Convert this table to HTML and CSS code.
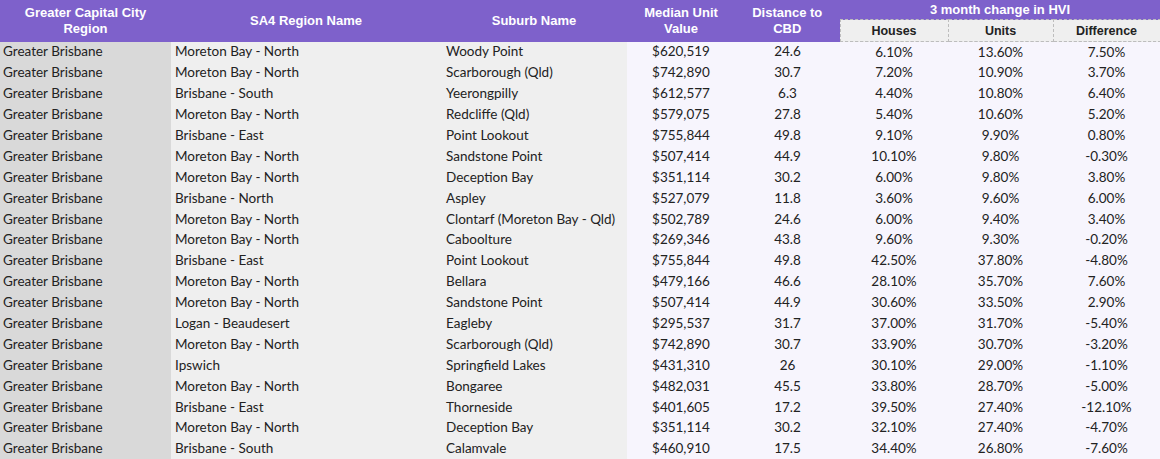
FILE: index.html
```html
<!DOCTYPE html>
<html>
<head>
<meta charset="utf-8">
<link rel="stylesheet" href="styles.css">
</head>
<body>
<table class="hvi">
  <colgroup>
    <col class="c-city">
    <col class="c-sa4">
    <col class="c-suburb">
    <col class="c-num">
    <col class="c-num2">
    <col class="c-h">
    <col class="c-u">
    <col class="c-d">
  </colgroup>
  <thead>
    <tr class="hr1">
      <th rowspan="2">Greater Capital City<br>Region</th>
      <th rowspan="2">SA4 Region Name</th>
      <th rowspan="2">Suburb Name</th>
      <th rowspan="2">Median Unit<br>Value</th>
      <th rowspan="2">Distance to<br>CBD</th>
      <th colspan="3" class="group">3 month change in HVI</th>
    </tr>
    <tr class="hr2">
      <th class="sub">Houses</th>
      <th class="sub">Units</th>
      <th class="sub">Difference</th>
    </tr>
  </thead>
  <tbody>
    <tr><td class="city">Greater Brisbane</td><td class="sa4">Moreton Bay - North</td><td class="sub-n">Woody Point</td><td>$620,519</td><td>24.6</td><td>6.10%</td><td>13.60%</td><td>7.50%</td></tr>
    <tr><td class="city">Greater Brisbane</td><td class="sa4">Moreton Bay - North</td><td class="sub-n">Scarborough (Qld)</td><td>$742,890</td><td>30.7</td><td>7.20%</td><td>10.90%</td><td>3.70%</td></tr>
    <tr><td class="city">Greater Brisbane</td><td class="sa4">Brisbane - South</td><td class="sub-n">Yeerongpilly</td><td>$612,577</td><td>6.3</td><td>4.40%</td><td>10.80%</td><td>6.40%</td></tr>
    <tr><td class="city">Greater Brisbane</td><td class="sa4">Moreton Bay - North</td><td class="sub-n">Redcliffe (Qld)</td><td>$579,075</td><td>27.8</td><td>5.40%</td><td>10.60%</td><td>5.20%</td></tr>
    <tr><td class="city">Greater Brisbane</td><td class="sa4">Brisbane - East</td><td class="sub-n">Point Lookout</td><td>$755,844</td><td>49.8</td><td>9.10%</td><td>9.90%</td><td>0.80%</td></tr>
    <tr><td class="city">Greater Brisbane</td><td class="sa4">Moreton Bay - North</td><td class="sub-n">Sandstone Point</td><td>$507,414</td><td>44.9</td><td>10.10%</td><td>9.80%</td><td>-0.30%</td></tr>
    <tr><td class="city">Greater Brisbane</td><td class="sa4">Moreton Bay - North</td><td class="sub-n">Deception Bay</td><td>$351,114</td><td>30.2</td><td>6.00%</td><td>9.80%</td><td>3.80%</td></tr>
    <tr><td class="city">Greater Brisbane</td><td class="sa4">Brisbane - North</td><td class="sub-n">Aspley</td><td>$527,079</td><td>11.8</td><td>3.60%</td><td>9.60%</td><td>6.00%</td></tr>
    <tr><td class="city">Greater Brisbane</td><td class="sa4">Moreton Bay - North</td><td class="sub-n">Clontarf (Moreton Bay - Qld)</td><td>$502,789</td><td>24.6</td><td>6.00%</td><td>9.40%</td><td>3.40%</td></tr>
    <tr><td class="city">Greater Brisbane</td><td class="sa4">Moreton Bay - North</td><td class="sub-n">Caboolture</td><td>$269,346</td><td>43.8</td><td>9.60%</td><td>9.30%</td><td>-0.20%</td></tr>
    <tr><td class="city">Greater Brisbane</td><td class="sa4">Brisbane - East</td><td class="sub-n">Point Lookout</td><td>$755,844</td><td>49.8</td><td>42.50%</td><td>37.80%</td><td>-4.80%</td></tr>
    <tr><td class="city">Greater Brisbane</td><td class="sa4">Moreton Bay - North</td><td class="sub-n">Bellara</td><td>$479,166</td><td>46.6</td><td>28.10%</td><td>35.70%</td><td>7.60%</td></tr>
    <tr><td class="city">Greater Brisbane</td><td class="sa4">Moreton Bay - North</td><td class="sub-n">Sandstone Point</td><td>$507,414</td><td>44.9</td><td>30.60%</td><td>33.50%</td><td>2.90%</td></tr>
    <tr><td class="city">Greater Brisbane</td><td class="sa4">Logan - Beaudesert</td><td class="sub-n">Eagleby</td><td>$295,537</td><td>31.7</td><td>37.00%</td><td>31.70%</td><td>-5.40%</td></tr>
    <tr><td class="city">Greater Brisbane</td><td class="sa4">Moreton Bay - North</td><td class="sub-n">Scarborough (Qld)</td><td>$742,890</td><td>30.7</td><td>33.90%</td><td>30.70%</td><td>-3.20%</td></tr>
    <tr><td class="city">Greater Brisbane</td><td class="sa4">Ipswich</td><td class="sub-n">Springfield Lakes</td><td>$431,310</td><td>26</td><td>30.10%</td><td>29.00%</td><td>-1.10%</td></tr>
    <tr><td class="city">Greater Brisbane</td><td class="sa4">Moreton Bay - North</td><td class="sub-n">Bongaree</td><td>$482,031</td><td>45.5</td><td>33.80%</td><td>28.70%</td><td>-5.00%</td></tr>
    <tr><td class="city">Greater Brisbane</td><td class="sa4">Brisbane - East</td><td class="sub-n">Thorneside</td><td>$401,605</td><td>17.2</td><td>39.50%</td><td>27.40%</td><td>-12.10%</td></tr>
    <tr><td class="city">Greater Brisbane</td><td class="sa4">Moreton Bay - North</td><td class="sub-n">Deception Bay</td><td>$351,114</td><td>30.2</td><td>32.10%</td><td>27.40%</td><td>-4.70%</td></tr>
    <tr><td class="city">Greater Brisbane</td><td class="sa4">Brisbane - South</td><td class="sub-n">Calamvale</td><td>$460,910</td><td>17.5</td><td>34.40%</td><td>26.80%</td><td>-7.60%</td></tr>
  </tbody>
</table>
</body>
</html>
```

FILE: styles.css
```css
html, body {
  margin: 0;
  padding: 0;
  background: #ffffff;
}

.hvi {
  width: 1160px;
  border-collapse: collapse;
  table-layout: fixed;
  font-family: "Lato", "Liberation Sans", sans-serif;
  font-size: 13.5px;
  color: #222222;
}

.c-city { width: 171px; }
.c-sa4 { width: 270px; }
.c-suburb { width: 186px; }
.c-num { width: 108px; }
.c-num2 { width: 105px; }
.c-h { width: 108px; }
.c-u { width: 105px; }
.c-d { width: 107px; }

.hvi th {
  background: #7e61cb;
  color: #ffffff;
  font-family: "Liberation Sans", "Lato", sans-serif;
  font-weight: 700;
  font-size: 13px;
  line-height: 16px;
  padding: 0;
  text-align: center;
  vertical-align: middle;
}

.hr1 { height: 19px; }
.hr2 { height: 22px; }

.hvi th.group {
  vertical-align: middle;
  height: 19px;
  font-size: 13px;
}

.hvi th.sub {
  background: #efefef;
  color: #222222;
  font-size: 12.5px;
  border: 1px dashed #bdbdbd;
  padding-top: 1px;
}

.hvi tbody tr {
  height: 20.9px;
}

.hvi td {
  padding: 0;
  text-align: center;
  background: #f7f5fd;
  white-space: nowrap;
  line-height: 15px;
}

.hvi td.city {
  background: #d9d9d9;
  text-align: left;
  padding-left: 3px;
}

.hvi td.sa4 {
  background: #efefef;
  text-align: left;
  padding-left: 4px;
}

.hvi td.sub-n {
  background: #efefef;
  text-align: left;
  padding-left: 5px;
}
```
